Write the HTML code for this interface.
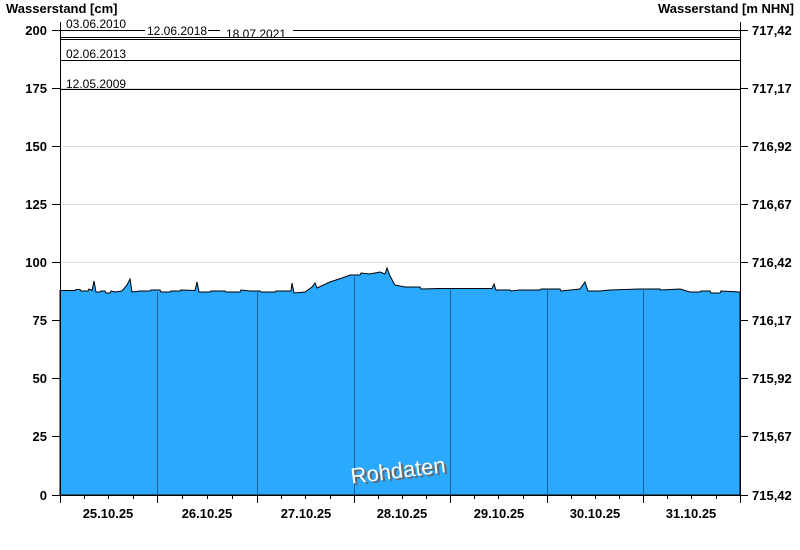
<!DOCTYPE html>
<html><head><meta charset="utf-8"><style>
body{margin:0;background:#fff;width:800px;height:550px;overflow:hidden}
svg{display:block}
text{font-family:"Liberation Sans",Arial,sans-serif}
.b{font-weight:bold;font-size:12px;fill:#000}
.t{font-weight:bold;font-size:13px;fill:#000}
.s{font-size:12px;fill:#000}
</style></head><body>
<svg width="800" height="550" viewBox="0 0 800 550" xmlns="http://www.w3.org/2000/svg">
<g stroke="#ddd" stroke-width="1">
<line x1="60" y1="88.5" x2="740" y2="88.5"/>
<line x1="60" y1="146.5" x2="740" y2="146.5"/>
<line x1="60" y1="204.5" x2="740" y2="204.5"/>
<line x1="60" y1="262.5" x2="740" y2="262.5"/>
</g>
<path fill="#2aa9ff" stroke="#000" stroke-width="1" d="M60,495 L60,290.5 L75,290.5 L76,289.5 L80,289.5 L81,291 L88,291 L89,289 L92,290.5 L94,281 L96,292 L100,292 L101,291 L105,291 L106,293 L110,293 L111,291 L115,292 L122,291 L127,285 L130,279 L132,292 L140,291 L150,291 L151,290 L160,290 L161,292 L170,292 L171,291 L180,291 L181,290 L195,290.5 L197,282 L199,292 L210,292 L211,291 L225,291 L226,292 L240,292 L241,290 L250,291 L260,291 L261,292 L275,292 L276,291 L291,291 L292,283 L294,293 L305,292 L312,287 L315,283 L317,288 L330,282 L345,277 L350,275 L360,275 L361,273 L370,274 L375,273 L380,272 L385,274 L387,268 L390,276 L395,285 L405,287 L420,287 L421,289 L440,288.5 L492,288.5 L494,284 L496,290 L510,290 L511,291 L520,290 L540,290 L541,289 L560,289 L561,291 L580,289 L585,282 L588,291 L600,291 L610,290 L640,289 L660,289 L661,290 L680,289 L690,292 L700,292 L701,291 L710,291 L711,293 L720,293 L721,291 L740,292 L740,495 Z"/>
<g stroke="#1a5f8f" stroke-width="1">
<line x1="157.5" y1="292" x2="157.5" y2="495"/>
<line x1="257.5" y1="292" x2="257.5" y2="495"/>
<line x1="354.5" y1="277" x2="354.5" y2="495"/>
<line x1="450.5" y1="289" x2="450.5" y2="495"/>
<line x1="547.5" y1="290" x2="547.5" y2="495"/>
<line x1="643.5" y1="289" x2="643.5" y2="495"/>
</g>
<g stroke="#000" stroke-width="1">
<line x1="60" y1="30.5" x2="145" y2="30.5"/>
<line x1="208" y1="30.5" x2="220" y2="30.5"/>
<line x1="293" y1="30.5" x2="740" y2="30.5"/>
<line x1="60" y1="37.5" x2="740" y2="37.5"/>
<line x1="60" y1="39.5" x2="740" y2="39.5"/>
<line x1="60" y1="60.5" x2="740" y2="60.5"/>
<line x1="60" y1="89.5" x2="740" y2="89.5"/>
<line x1="60.5" y1="22" x2="60.5" y2="503"/>
<line x1="740.5" y1="22" x2="740.5" y2="503"/>
<line x1="60" y1="495.5" x2="741" y2="495.5"/>
</g>
<g stroke="#000">
<path d="M52,30.5H60M52,88.5H60M52,146.5H60M52,204.5H60M52,262.5H60M52,320.5H60M52,378.5H60M52,436.5H60M52,495.5H60"/>
<path d="M740,30.5H748M740,88.5H748M740,146.5H748M740,204.5H748M740,262.5H748M740,320.5H748M740,378.5H748M740,436.5H748M740,495.5H748"/>
<path d="M157.5,495V503M257.5,495V503M354.5,495V503M450.5,495V503M547.5,495V503M643.5,495V503M60.5,495V503M740.5,495V503"/>
<path d="M84.5,495V499M108.5,495V499M133.5,495V499M182.5,495V499M207.5,495V499M232.5,495V499M281.5,495V499M305.5,495V499M330.5,495V499M378.5,495V499M402.5,495V499M426.5,495V499M474.5,495V499M498.5,495V499M523.5,495V499M571.5,495V499M595.5,495V499M619.5,495V499M667.5,495V499M691.5,495V499M716.5,495V499"/>
</g>
<text class="s" x="66" y="28">03.06.2010</text>
<text class="s" x="147" y="35">12.06.2018</text>
<text class="s" x="226" y="38">18.07.2021</text>
<text class="s" x="66" y="58">02.06.2013</text>
<text class="s" x="66" y="88">12.05.2009</text>
<text class="t" x="6" y="13">Wasserstand [cm]</text>
<text class="t" x="794" y="13" text-anchor="end">Wasserstand [m NHN]</text>
<g class="t" text-anchor="end">
<text x="47" y="35">200</text><text x="47" y="93">175</text><text x="47" y="151">150</text><text x="47" y="209">125</text><text x="47" y="267">100</text><text x="47" y="325">75</text><text x="47" y="383">50</text><text x="47" y="441">25</text><text x="47" y="500">0</text>
</g>
<g class="t">
<text x="752" y="35">717,42</text><text x="752" y="93">717,17</text><text x="752" y="151">716,92</text><text x="752" y="209">716,67</text><text x="752" y="267">716,42</text><text x="752" y="325">716,17</text><text x="752" y="383">715,92</text><text x="752" y="441">715,67</text><text x="752" y="500">715,42</text>
</g>
<g class="t" text-anchor="middle">
<text x="108" y="518">25.10.25</text><text x="207" y="518">26.10.25</text><text x="306" y="518">27.10.25</text><text x="402" y="518">28.10.25</text><text x="499" y="518">29.10.25</text><text x="595" y="518">30.10.25</text><text x="691" y="518">31.10.25</text>
</g>
<g transform="rotate(-7 398 470)">
<text x="400" y="480" text-anchor="middle" font-size="22" fill="#666">Rohdaten</text>
<text x="398" y="478" text-anchor="middle" font-size="22" fill="#fff">Rohdaten</text>
</g>
</svg>
</body></html>
